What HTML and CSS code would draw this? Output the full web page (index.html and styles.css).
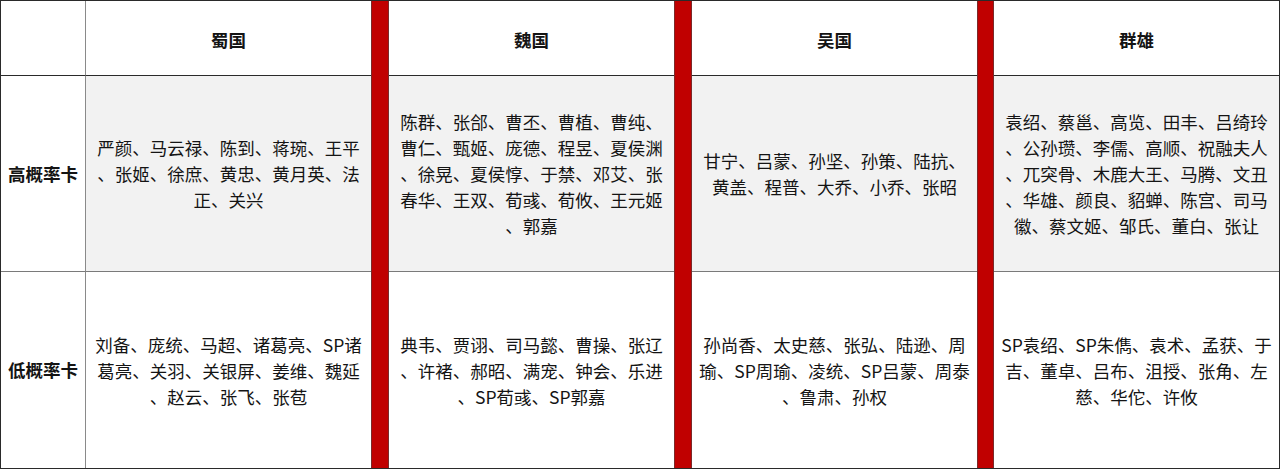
FILE: index.html
```html
<!DOCTYPE html>
<html lang="zh-CN">
<head>
<meta charset="utf-8">
<title>武将概率表</title>
<link rel="stylesheet" href="styles.css">
</head>
<body>
<div class="table">
  <div class="cell corner"></div>
  <div class="cell head c1">蜀国</div>
  <div class="bar b1"></div>
  <div class="cell head c2">魏国</div>
  <div class="bar b2"></div>
  <div class="cell head c3">吴国</div>
  <div class="bar b3"></div>
  <div class="cell head c4 last">群雄</div>

  <div class="cell label">高概率卡</div>
  <div class="cell hi c1">严颜、马云禄、陈到、蒋琬、王平<br>、张姬、徐庶、黄忠、黄月英、法<br>正、关兴</div>
  <div class="cell hi c2">陈群、张郃、曹丕、曹植、曹纯、<br>曹仁、甄姬、庞德、程昱、夏侯渊<br>、徐晃、夏侯惇、于禁、邓艾、张<br>春华、王双、荀彧、荀攸、王元姬<br>、郭嘉</div>
  <div class="cell hi c3">甘宁、吕蒙、孙坚、孙策、陆抗、<br>黄盖、程普、大乔、小乔、张昭</div>
  <div class="cell hi c4 last">袁绍、蔡邕、高览、田丰、吕绮玲<br>、公孙瓒、李儒、高顺、祝融夫人<br>、兀突骨、木鹿大王、马腾、文丑<br>、华雄、颜良、貂蝉、陈宫、司马<br>徽、蔡文姬、邹氏、董白、张让</div>

  <div class="cell label bottom">低概率卡</div>
  <div class="cell lo c1">刘备、庞统、马超、诸葛亮、SP诸<br>葛亮、关羽、关银屏、姜维、魏延<br>、赵云、张飞、张苞</div>
  <div class="cell lo c2">典韦、贾诩、司马懿、曹操、张辽<br>、许褚、郝昭、满宠、钟会、乐进<br>、SP荀彧、SP郭嘉</div>
  <div class="cell lo c3">孙尚香、太史慈、张弘、陆逊、周<br>瑜、SP周瑜、凌统、SP吕蒙、周泰<br>、鲁肃、孙权</div>
  <div class="cell lo c4 last">SP袁绍、SP朱儁、袁术、孟获、于<br>吉、董卓、吕布、沮授、张角、左<br>慈、华佗、许攸</div>
</div>
</body>
</html>
```

FILE: styles.css
```css
html, body {
  margin: 0;
  padding: 0;
  background: #ffffff;
}

body {
  font-family: "Noto Sans CJK SC", "Noto Sans", sans-serif;
  color: #141414;
}

.table {
  width: 1280px;
  height: 469px;
  box-sizing: border-box;
  border: 1px solid #2a2a2a;
  display: grid;
  grid-template-columns: 85px 285px 18px 285px 18px 285px 17px 285px;
  grid-template-rows: 75px 196px 196px;
}

.cell {
  box-sizing: border-box;
  display: flex;
  align-items: center;
  justify-content: center;
  text-align: center;
  font-size: 17.5px;
  line-height: 26px;
}

.corner, .label {
  border-right: 1px solid #8a8a8a;
}

.head, .corner {
  border-bottom: 1px solid #2a2a2a;
  font-weight: bold;
  font-size: 17.5px;
  padding-top: 4px;
}

.label {
  font-weight: bold;
  font-size: 17.5px;
  border-bottom: 1px solid #7a7a7a;
}

.label.bottom {
  border-bottom: none;
}

.hi {
  background: #f2f2f2;
  border-bottom: 1px solid #7a7a7a;
}

.lo {
  padding-top: 2px;
}

.c1 { grid-column: 2; }
.c2 { grid-column: 4; }
.c3 { grid-column: 6; }
.c4 { grid-column: 8; }

.bar {
  grid-row: 1 / 4;
  background: #c00000;
  border-left: 1px solid #7a2a2a;
  border-right: 1px solid #7a2a2a;
}

.b1 { grid-column: 3; }
.b2 { grid-column: 5; }
.b3 { grid-column: 7; }
```
